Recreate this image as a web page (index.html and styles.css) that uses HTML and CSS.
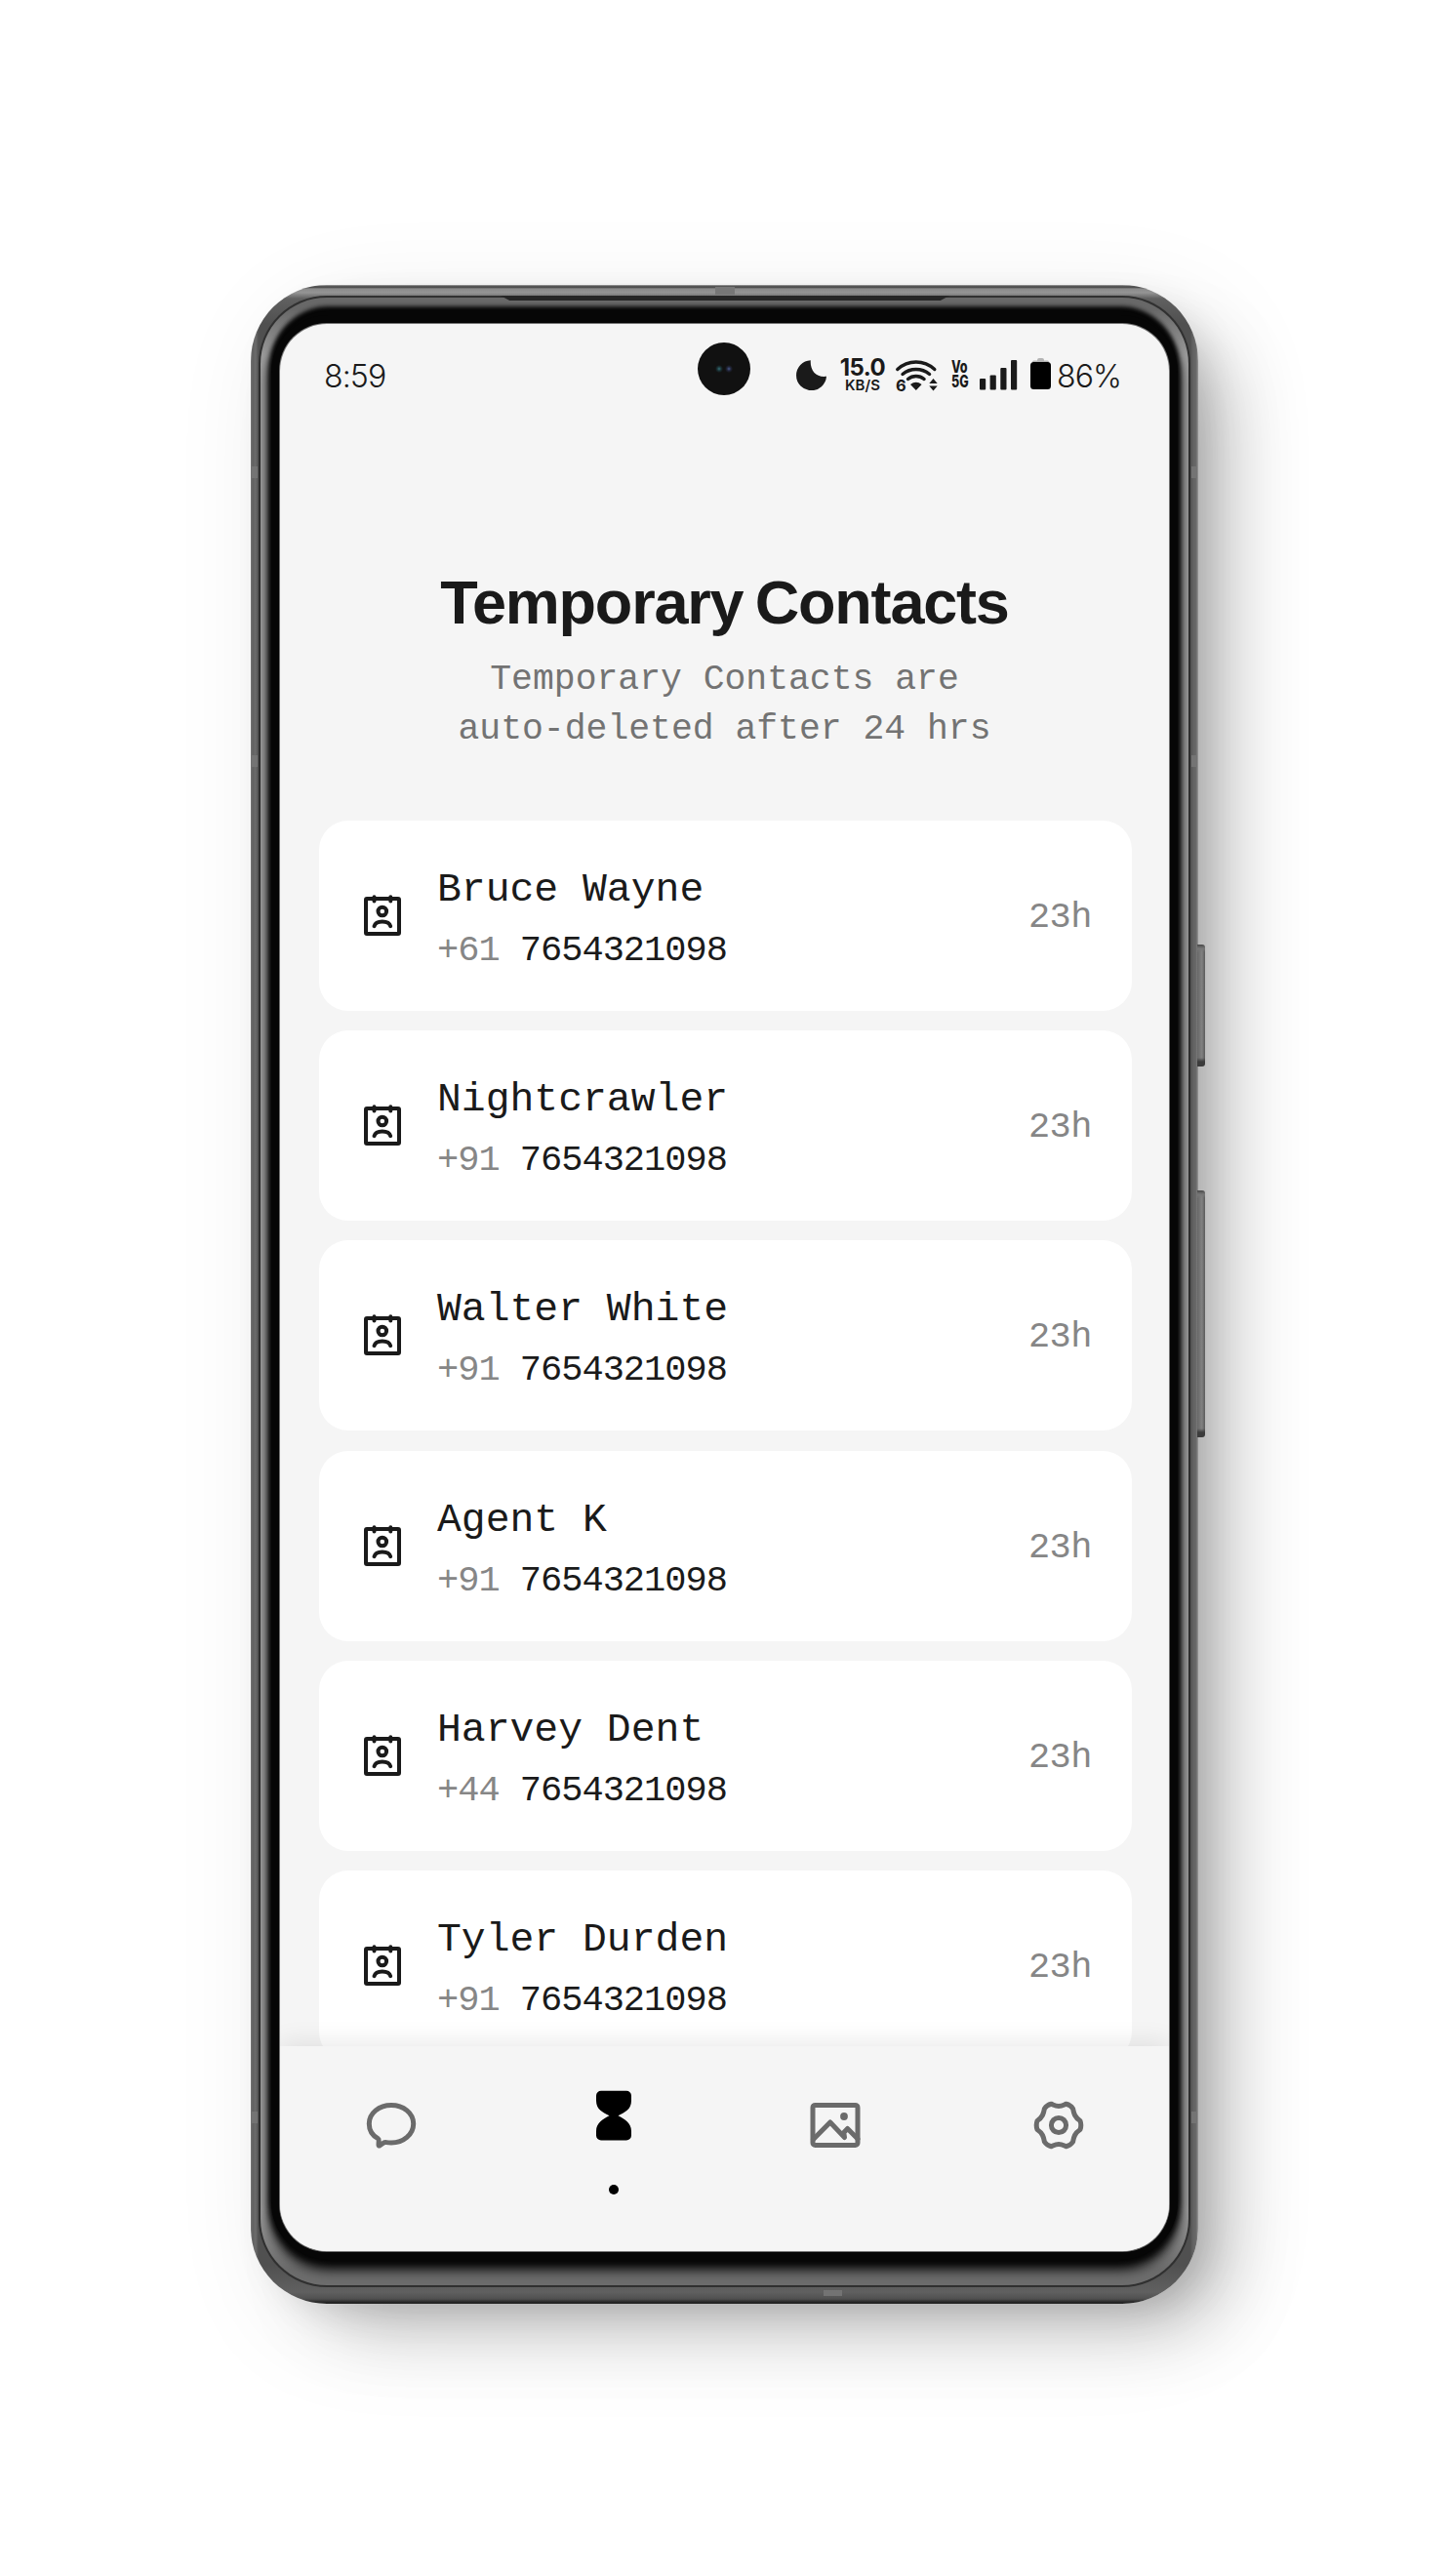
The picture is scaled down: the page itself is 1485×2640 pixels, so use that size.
FILE: index.html
```html
<!DOCTYPE html>
<html lang="en">
<head>
<meta charset="utf-8">
<title>Temporary Contacts</title>
<link rel="stylesheet" href="styles.css">
</head>
<body>
<svg width="0" height="0" class="sprite">
  <symbol id="contact" viewBox="0 0 38 43">
    <g fill="none" stroke="#1a1a1a" stroke-width="4" stroke-linecap="round" stroke-linejoin="round">
      <rect x="2" y="4" width="34" height="36" rx="1"/>
      <path d="M10.500 2.200v4.200M27.300 2.200v4.200M10.500 32.200c1-3.400 4.400-4.600 8.300-4.600s7.400 1.200 8.400 4.600"/>
      <circle cx="18.800" cy="17" r="4.300"/>
    </g>
  </symbol>
</svg>
<main class="stage">
  <div class="device">
    <i class="key key-power"></i>
    <i class="key key-volume"></i>
    <i class="band band-top"></i>
    <i class="band band-bottom"></i>
    <i class="band band-side l1"></i><i class="band band-side l2"></i><i class="band band-side l3"></i>
    <i class="band band-side r1"></i><i class="band band-side r2"></i><i class="band band-side r3"></i>
    <div class="seam"><div class="bevel">
      <i class="earpiece"></i>
      <div class="glass"><div class="screen">
      <i class="camera"></i>
      <header class="status">
        <span class="clock">8:59</span>
        <svg class="moon" width="31" height="31" viewBox="0 0 31 31"><path fill="#1a1a1a" d="M14.800.2C14 10 20 18.200 31 16.800A15.500 15.500 0 1 1 14.800.2z"/></svg>
        <div class="rate"><b>15.0</b><span>KB/S</span></div>
        <svg class="wifi" width="43" height="34" viewBox="0 0 43 34">
          <g fill="none" stroke="#1a1a1a" stroke-width="3.400" stroke-linecap="round">
            <path d="M1.800 10.500Q10 3 20.800 3t19 7.500M7 15.500q6-5 13.800-5t13.800 5M12.500 20.500q3.500-3 8.300-3t8.300 3"/>
          </g>
          <path fill="#1a1a1a" d="M15 26q5.800-4.500 11.600 0L20.800 32zM34.300 25l4.200-5 4.200 5zM34.300 27.500h8.400l-4.200 5z"/>
          <text x="0" y="32.500" class="wifi-gen">6</text>
        </svg>
        <div class="volte"><b>Vo</b><b>5G</b></div>
        <svg class="bars" width="39" height="31" viewBox="0 0 39 31"><g fill="#1a1a1a"><rect y="19" width="6.200" height="11.500" rx="1"/><rect x="10.600" y="15.500" width="6.200" height="15" rx="1"/><rect x="21.300" y="8" width="6.200" height="22.500" rx="1"/><rect x="32" y="0" width="6.200" height="30.500" rx="1"/></g></svg>
        <svg class="battery" width="21" height="32" viewBox="0 0 21 32"><rect x="7" width="7" height="6" rx="2" fill="#b4b4b4"/><rect x="2" y="2.600" width="17" height="4" rx="1.500" fill="#b4b4b4"/><rect y="4" width="21" height="28" rx="3.500"/></svg>
        <span class="percent">86%</span>
      </header>
      <section class="heading">
        <h1>Temporary Contacts</h1>
        <p>Temporary Contacts are<br>auto-deleted after 24 hrs</p>
      </section>
      <ul class="list">
        <li class="card"><svg class="avatar"><use href="#contact"/></svg><div class="who"><div class="name">Bruce Wayne</div><div class="phone"><span>+61</span> 7654321098</div></div><span class="left">23h</span></li>
        <li class="card"><svg class="avatar"><use href="#contact"/></svg><div class="who"><div class="name">Nightcrawler</div><div class="phone"><span>+91</span> 7654321098</div></div><span class="left">23h</span></li>
        <li class="card"><svg class="avatar"><use href="#contact"/></svg><div class="who"><div class="name">Walter White</div><div class="phone"><span>+91</span> 7654321098</div></div><span class="left">23h</span></li>
        <li class="card"><svg class="avatar"><use href="#contact"/></svg><div class="who"><div class="name">Agent K</div><div class="phone"><span>+91</span> 7654321098</div></div><span class="left">23h</span></li>
        <li class="card"><svg class="avatar"><use href="#contact"/></svg><div class="who"><div class="name">Harvey Dent</div><div class="phone"><span>+44</span> 7654321098</div></div><span class="left">23h</span></li>
        <li class="card"><svg class="avatar"><use href="#contact"/></svg><div class="who"><div class="name">Tyler Durden</div><div class="phone"><span>+91</span> 7654321098</div></div><span class="left">23h</span></li>
      </ul>
      <nav class="tabs">
        <a class="tab"><svg width="52" height="48" viewBox="0 0 52 48"><path d="M26 3.500C13.600 3.500 3.300 11.600 3.300 22.500c0 6.500 3.400 12 9 15.200.8.500 1 1.300.9 2.300l-.2 4.300c0 .7.400.9 1 .6l4.300-2.900c.9-.5 1.600-.6 2.600-.4 1.600.3 3.300.4 5.100.4 12.400 0 22.700-8.600 22.700-19.500S38.400 3.500 26 3.500z"/></svg></a>
        <a class="tab active"><svg width="36" height="52" viewBox="0 0 36 52"><path d="M5 .8h26a5 5 0 0 1 5 5V11c0 9-7 12-13.500 15.200C29 29.500 36 33.500 36 42v4.500a5 5 0 0 1-5 5H5a5 5 0 0 1-5-5V42c0-8.500 7-12.500 13.500-15.800C7 23 0 20 0 11V5.800a5 5 0 0 1 5-5z"/></svg><i class="dot"></i></a>
        <a class="tab"><svg width="52" height="48" viewBox="0 0 52 48"><rect x="3" y="3.400" width="46" height="41" rx="2.500"/><path d="M3.500 38.500L20.800 21 35.500 36.500 34.800 31.500l3.800-4L49 38"/><circle cx="35" cy="15" r="3.900" class="sun"/></svg></a>
        <a class="tab"><svg width="52" height="52" viewBox="0 0 52 52"><path d="M18.300 4.200C20.500 5 22.500 6.500 26 6.500S31.500 5 33.700 4.200Q38.200 5.300 40.600 9C41.500 13.500 42 17.500 48 21.500Q49.600 26 48 30.500C42 34.500 41.500 38.500 40.600 43Q38.200 46.700 33.700 47.800C31.500 47 29.500 45.500 26 45.500S20.500 47 18.300 47.800Q13.800 46.700 11.400 43C10.500 38.500 10 34.500 4 30.500Q2.400 26 4 21.500C10 17.500 10.500 13.500 11.400 9Q13.800 5.300 18.300 4.200z"/><circle cx="26" cy="26" r="7.600"/></svg></a>
      </nav>
      </div></div>
    </div></div>
  </div>
</main>
</body>
</html>
```
FILE: styles.css
```css
* { box-sizing: border-box; }
body { margin: 0; background: #fff; color: #1a1a1a; font-family: Inter, "Liberation Sans", sans-serif; }
.sprite { position: absolute; }
.stage { width: 1485px; height: 2640px; padding: 292px 0 0 257px; overflow: hidden; }

/* Device frame */
.device {
  position: relative; width: 971px; height: 2069px; padding: 11px 8px 17px; border-radius: 78px;
  background:
    linear-gradient(to bottom, #a5a5a5 0, #3c3c3c 2px, #8a8a8a 4px, #949494 8px, #606060 14px, transparent 40px),
    linear-gradient(to top, #1c1c1c 0, #2a2a2a 2px, #505050 5px, #606060 12px, transparent 40px),
    linear-gradient(to right, #777 0, #606060 2px, #6c6c6c 5px, #505050 8px, #505050 963px, #606060 965px, #6a6a6a 969px, #999 971px);
  box-shadow: 48px 42px 80px -28px rgba(0,0,0,.26), 16px 14px 40px -10px rgba(0,0,0,.13), 24px 26px 110px rgba(0,0,0,.09);
}
.seam { height: 100%; padding: 2px; border-radius: 70px; background: #303030; }
.bevel {
  position: relative; height: 100%; padding: 27px 20px 35px 20px; border-radius: 68px;
  background: linear-gradient(to bottom, #686868 0, #686868 12px, #9c9c9c 60px, #9c9c9c 1960px, #6c6c6c 2020px);
}
.glass {
  height: 100%; border-radius: 50px; background: #050505;
  box-shadow: 0 0 0 9px #060606, 0 -9px 4px 9px #060606, 0 0 6px 11px #060606, 0 8px 12px 11px #060606;
}
.earpiece { position: absolute; left: 246px; top: -2px; width: 460px; height: 5px; background: #262626; clip-path: polygon(0 0, 100% 0, 98% 100%, 2% 100%); }
.key { position: absolute; left: 970px; width: 8px; border-radius: 0 3px 3px 0; background: linear-gradient(to bottom, #484848 0, #777 4px, transparent 8px, transparent calc(100% - 9px), #3c3c3c calc(100% - 5px)), linear-gradient(to right, #686868, #818181 60%, #5a5a5a); }
.key-power { top: 676px; height: 125px; }
.key-volume { top: 928px; height: 253px; }
.band { position: absolute; background: #777; }
.band-top { left: 476px; top: 2px; width: 20px; height: 8px; }
.band-bottom { left: 587px; bottom: 8px; width: 19px; height: 6px; background: #737373; }
.band-side { width: 6px; height: 12px; background: #747474; }
.l1, .l2, .l3 { left: 1px; }
.r1, .r2, .r3 { right: 1px; }
.l1, .r1 { top: 186px; }
.l2, .r2 { top: 482px; }
.l3, .r3 { top: 1872px; }

/* Screen */
.screen { position: relative; height: 100%; display: flex; flex-direction: column; border-radius: 48px; background: #f5f5f5; overflow: hidden; box-shadow: 0 0 0 1px #777; }
.camera { position: absolute; left: 428px; top: 19px; width: 54px; height: 54px; border-radius: 50%; background: radial-gradient(circle at 22px 27px, #347078 0, #1b3337 2px, transparent 4px), radial-gradient(circle at 32px 27px, #4a5a90 0, #22263b 2px, transparent 4px), #111; }

.status { display: flex; align-items: flex-start; flex: none; height: 130px; padding: 0 0 0 45px; line-height: 1; }
.clock, .percent { margin-top: 38px; font-size: 32px; font-weight: 300; letter-spacing: -0.900px; }
.clock { width: 484px; }
.moon { flex: none; margin-top: 37px; }
.rate { display: flex; flex-direction: column; align-items: center; flex: none; width: 48px; margin: 33px 0 0 13px; }
.rate b { font-size: 24px; line-height: 24px; font-weight: 700; letter-spacing: -0.500px; }
.rate span { font-size: 15px; line-height: 12px; font-weight: 600; }
.wifi { flex: none; margin: 36px 0 0 10px; overflow: visible; }
.wifi-gen { font: 700 16.500px Inter, sans-serif; fill: #1a1a1a; }
.volte { display: flex; flex-direction: column; flex: none; width: 17px; margin: 37px 0 0 14px; font-size: 17px; line-height: 15px; transform: scaleX(.74); transform-origin: 0 0; }
.volte b { font-weight: 800; }
.bars { flex: none; margin: 37px 0 0 12px; }
.battery { flex: none; margin: 35px 0 0 13px; }
.percent { margin-left: 6px; }

.heading { flex: none; height: 379px; padding-top: 117px; text-align: center; }
h1 { margin: 0; font: 700 63px/76px "Liberation Sans", Arial, sans-serif; letter-spacing: -1.200px; word-spacing: -4px; }
p { margin: 16px 0 0; font: 36.400px/51px "Liberation Mono", monospace; color: #737373; }

.list { display: flex; flex-direction: column; flex: 1; gap: 20.200px; min-height: 0; margin: 0; padding: 0 38px 0 40px; list-style: none; overflow: hidden; font-family: "Liberation Mono", monospace; }
.card { display: flex; align-items: center; flex: none; height: 195px; padding: 0 41px 0 46px; border-radius: 30px; background: #fff; }
.avatar { flex: none; width: 38px; height: 43px; }
.who { flex: 1; margin-left: 37px; padding-top: 9px; white-space: pre; }
.name { font-size: 41.400px; line-height: 62px; }
.phone { font-size: 37px; line-height: 62px; letter-spacing: -1px; }
.phone span, .left { color: #868686; }
.left { padding-top: 3px; font-size: 37px; letter-spacing: -0.500px; }

/* Tab bar */
.tabs { position: relative; display: grid; grid-template-columns: repeat(4, 1fr); flex: none; height: 210px; background: #f5f5f5; box-shadow: 0 -4px 24px rgba(0,0,0,.09); }
.tab { display: flex; flex-direction: column; align-items: center; padding-top: 57px; }
.tab svg { fill: none; stroke: #6b6b6b; stroke-width: 5; stroke-linejoin: round; stroke-linecap: round; }
.tab:last-child { padding: 55px 0 0 2px; }
.tab .sun { fill: #6b6b6b; stroke: none; }
.tab.active { padding-top: 45px; }
.tab.active svg { fill: #000; stroke: none; }
.dot { width: 10px; height: 10px; margin-top: 45px; border-radius: 50%; background: #000; }
```
